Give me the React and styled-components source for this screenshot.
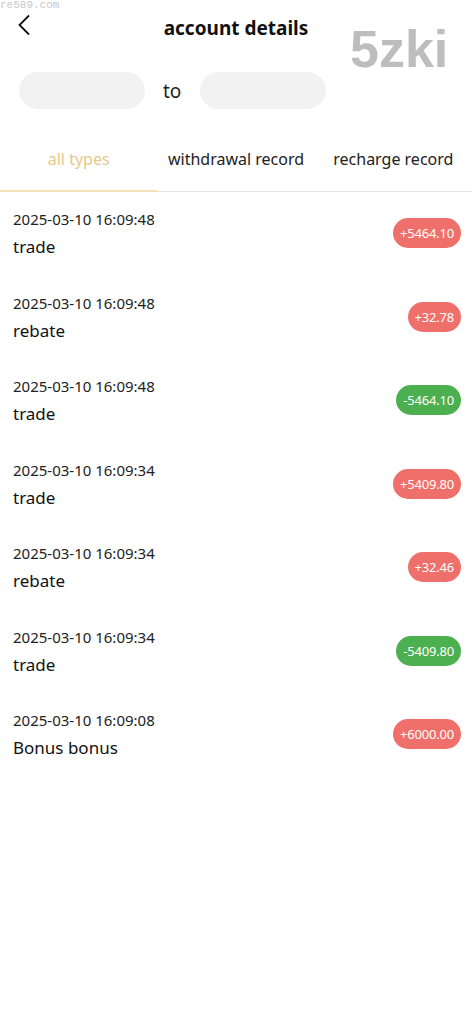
import React from 'react'
import styled, { createGlobalStyle } from 'styled-components'

const GlobalStyle = createGlobalStyle`
  body {
    margin: 0;
    background: #fff;
    font-family: "Noto Sans", "Open Sans", sans-serif;
    color: #222;
  }
`

const records = [
  { time: '2025-03-10 16:09:48', type: 'trade', amount: '+5464.10', plus: true },
  { time: '2025-03-10 16:09:48', type: 'rebate', amount: '+32.78', plus: true },
  { time: '2025-03-10 16:09:48', type: 'trade', amount: '-5464.10', plus: false },
  { time: '2025-03-10 16:09:34', type: 'trade', amount: '+5409.80', plus: true },
  { time: '2025-03-10 16:09:34', type: 'rebate', amount: '+32.46', plus: true },
  { time: '2025-03-10 16:09:34', type: 'trade', amount: '-5409.80', plus: false },
  { time: '2025-03-10 16:09:08', type: 'Bonus bonus', amount: '+6000.00', plus: true },
]

const tabs = ['all types', 'withdrawal record', 'recharge record']

function App() {
  return (
    <Page>
      <GlobalStyle />
      <SiteMark>re589.com</SiteMark>
      <BigMark>5zki</BigMark>
      <Header>
        <Back>
          <svg width="14" height="22" viewBox="0 0 14 22">
            <path d="M12 1.5 L2.5 11 L12 20.5" fill="none" stroke="#111" strokeWidth="1.8" />
          </svg>
        </Back>
        <Title>account details</Title>
      </Header>

      <DateRow>
        <DatePill />
        <To>to</To>
        <DatePill />
      </DateRow>

      <Tabs>
        {tabs.map((t, i) => (
          <Tab key={t} active={i === 0}>{t}</Tab>
        ))}
      </Tabs>

      <List>
        {records.map((r, i) => (
          <Row key={i}>
            <Info>
              <Time>{r.time}</Time>
              <Kind>{r.type}</Kind>
            </Info>
            <Amount plus={r.plus}>{r.amount}</Amount>
          </Row>
        ))}
      </List>
    </Page>
  )
}

const Page = styled.div`
  position: relative;
  width: 472px;
  min-height: 1024px;
  background: #fff;
`

const SiteMark = styled.div`
  position: absolute;
  left: 0;
  top: 0;
  font-family: "Liberation Mono", monospace;
  font-size: 11px;
  line-height: 11px;
  color: #c8c8c8;
`

const BigMark = styled.div`
  position: absolute;
  left: 350px;
  top: 19px;
  font-family: "Liberation Sans", Arial, sans-serif;
  font-weight: bold;
  font-size: 52px;
  line-height: 60px;
  color: #bdbdbd;
  z-index: 2;
`

const Header = styled.div`
  position: relative;
  height: 56px;
  display: flex;
  align-items: center;
  justify-content: center;
`

const Back = styled.div`
  position: absolute;
  left: 17px;
  top: 14px;
  line-height: 0;
`

const Title = styled.h1`
  margin: 0;
  font-size: 19px;
  font-weight: 700;
  color: #111;
`

const DateRow = styled.div`
  display: flex;
  align-items: center;
  padding: 16px 19px 0;
`

const DatePill = styled.div`
  width: 126px;
  height: 37px;
  border-radius: 19px;
  background: #f2f2f2;
`

const To = styled.span`
  margin: 0 19px 0 18px;
  font-size: 19px;
  color: #222;
`

const Tabs = styled.div`
  display: grid;
  grid-template-columns: repeat(3, 1fr);
  margin-top: 19px;
  border-bottom: 1px solid #e6e6e6;
`

const Tab = styled.div`
  height: 62px;
  display: flex;
  align-items: center;
  justify-content: center;
  font-size: 16px;
  white-space: nowrap;
  color: ${p => (p.active ? '#e7c88e' : '#222')};
  border-bottom: 2px solid ${p => (p.active ? '#f3e1b9' : 'transparent')};
  margin-bottom: -1px;
`

const List = styled.div`
  padding-top: 15px;
`

const Row = styled.div`
  height: 83.5px;
  display: flex;
  align-items: flex-start;
  justify-content: space-between;
  padding: 0 11px 0 13px;
`

const Info = styled.div`
  display: flex;
  flex-direction: column;
`

const Time = styled.div`
  font-size: 15px;
  line-height: 24px;
  color: #222;
`

const Kind = styled.div`
  font-size: 17px;
  line-height: 31px;
  color: #111;
`

const Amount = styled.div`
  margin-top: 11px;
  height: 30px;
  padding: 0 7px;
  border-radius: 15px;
  display: flex;
  align-items: center;
  font-size: 13px;
  letter-spacing: -0.2px;
  color: #fff;
  background: ${p => (p.plus ? '#ef6f6a' : '#4caf50')};
`

export default App
